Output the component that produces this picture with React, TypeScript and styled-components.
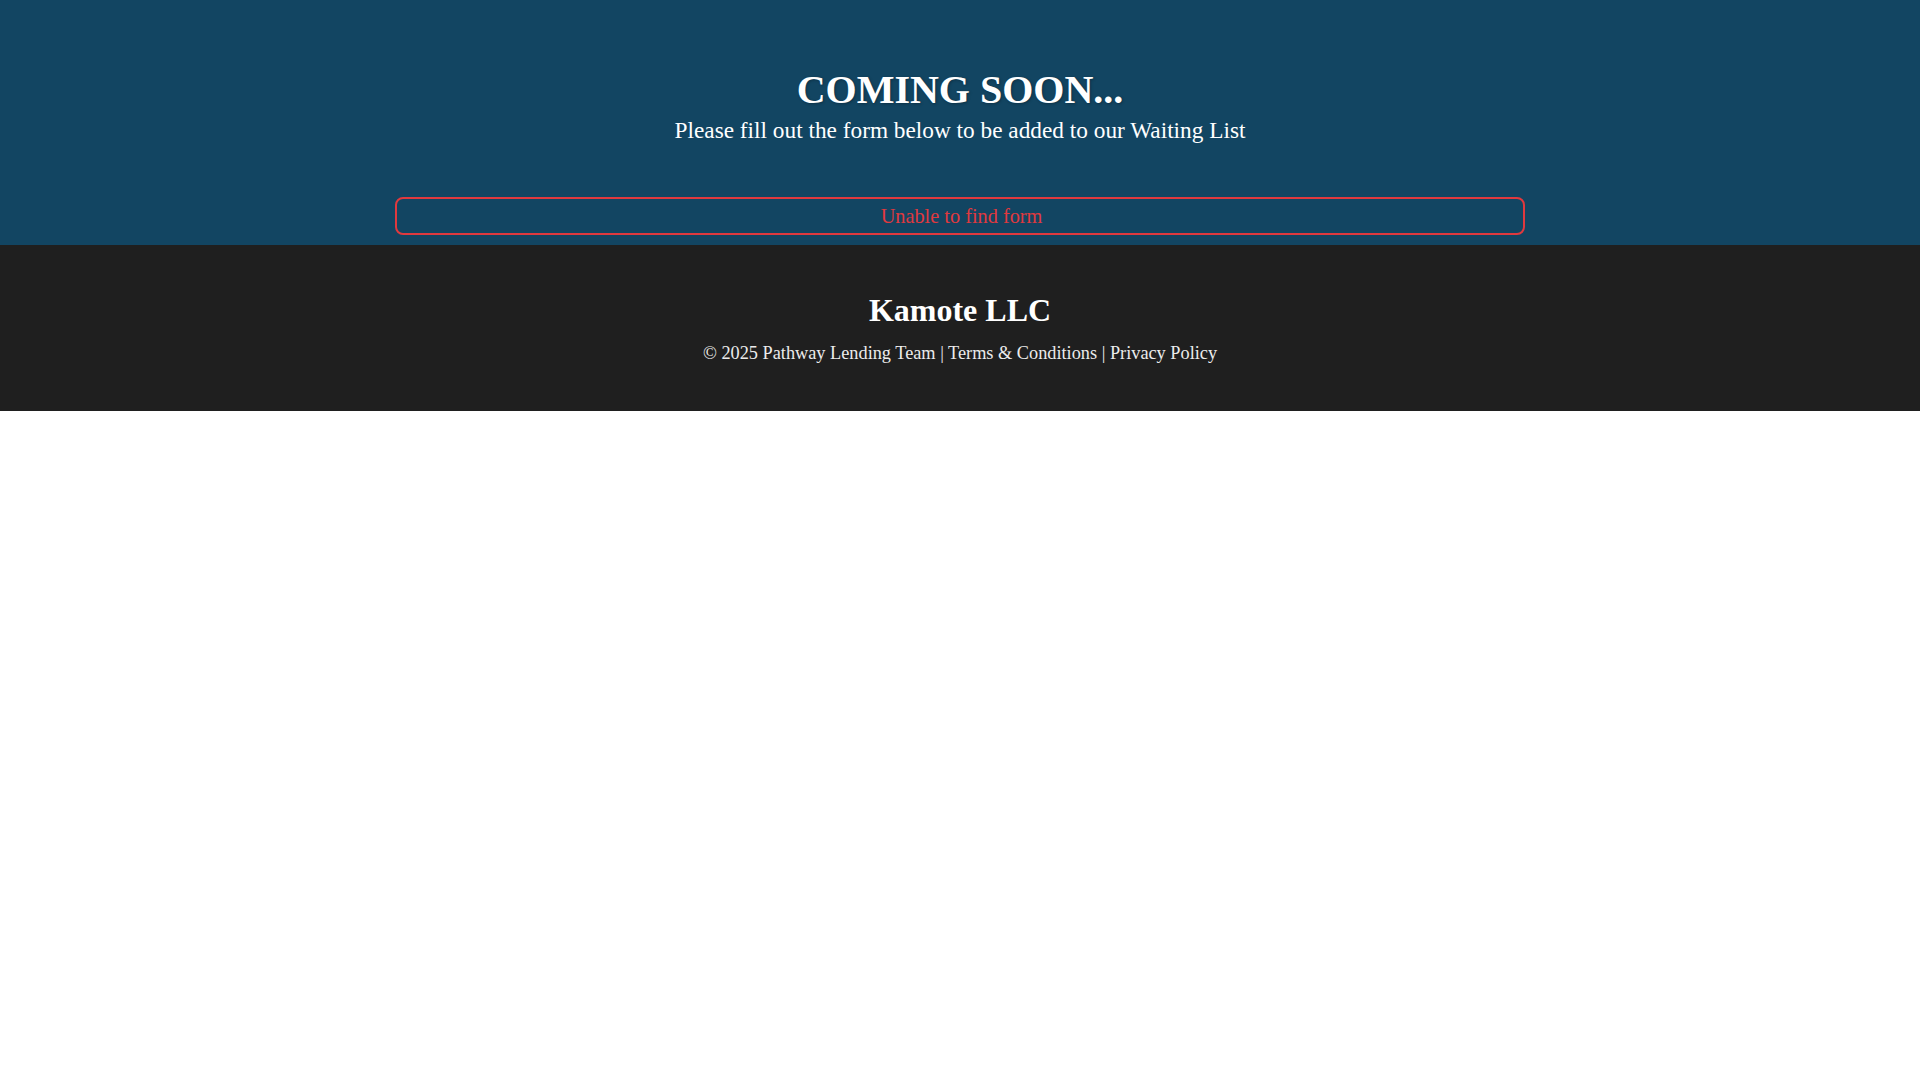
import styled, { createGlobalStyle } from 'styled-components';

const GlobalStyle = createGlobalStyle`
    html,
    body {
        margin: 0;
        padding: 0;
        background: #ffffff;
        font-family: 'Liberation Serif', 'Times New Roman', serif;
    }
`;

function App() {
    return (
        <div>
            <GlobalStyle />
            <Hero>
                <Title>COMING SOON...</Title>
                <Subtitle>Please fill out the form below to be added to our Waiting List</Subtitle>
                <FormError>Unable to find form</FormError>
            </Hero>
            <Footer>
                <Company>Kamote LLC</Company>
                <Legal>
                    © 2025 Pathway Lending Team | <FooterLink href="#">Terms &amp; Conditions</FooterLink> |{' '}
                    <FooterLink href="#">Privacy Policy</FooterLink>
                </Legal>
            </Footer>
        </div>
    );
}

export default App;

const Hero = styled.section`
    background: #124562;
    padding: 66px 0 10px;
    display: flex;
    flex-direction: column;
    align-items: center;
    text-align: center;
    color: #ffffff;
`;

const Title = styled.h1`
    margin: 0;
    font-size: 40px;
    line-height: 1.2;
    font-weight: bold;
    text-shadow: 1px 1px 3px rgba(0, 0, 0, 0.3);
`;

const Subtitle = styled.p`
    margin: 0 0 50px;
    font-size: 23.3px;
    line-height: 1.4;
`;

const FormError = styled.div`
    box-sizing: border-box;
    width: 1130px;
    padding: 2px 0 2px 3px;
    border: 2px solid #e0393e;
    border-radius: 8px;
    color: #e0393e;
    font-size: 20.3px;
    line-height: 30px;
    text-align: center;
`;

const Footer = styled.footer`
    background: #1f1f1f;
    padding: 46px 0 44px;
    display: flex;
    flex-direction: column;
    align-items: center;
    text-align: center;
    color: #ffffff;
`;

const Company = styled.h2`
    margin: 0 0 11px;
    font-size: 32px;
    line-height: 1.2;
    font-weight: bold;
`;

const Legal = styled.p`
    margin: 0;
    font-size: 18.3px;
    line-height: 1.5;
    color: #ececec;
`;

const FooterLink = styled.a`
    color: inherit;
    text-decoration: none;
`;
